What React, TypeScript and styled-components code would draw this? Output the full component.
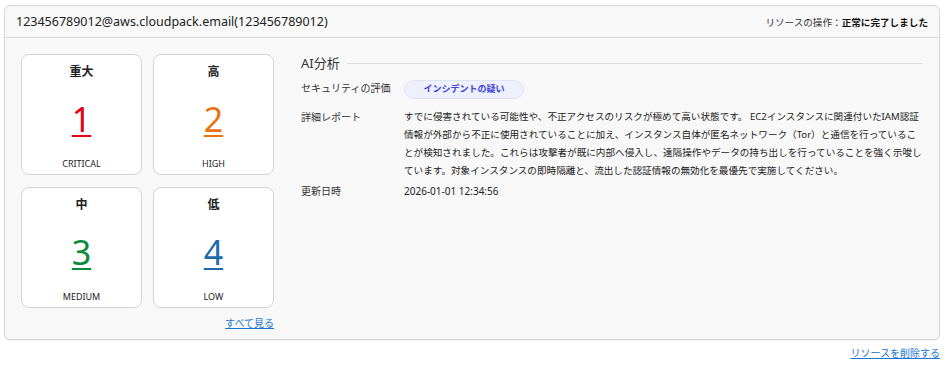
import React from "react";
import styled, { createGlobalStyle } from "styled-components";

const Global = createGlobalStyle`
  html, body { margin: 0; padding: 0; background: #ffffff; }
  body { font-family: "Noto Sans", "Noto Sans CJK JP", sans-serif; color: #222; }
`;

const Page = styled.div`
  padding: 5px 6px 0 4px;
  display: flex;
  flex-direction: column;
`;

const Panel = styled.section`
  border: 1px solid #d6d6d6;
  border-radius: 6px;
  background: #f8f8f8;
  box-shadow: 0 1px 1px rgba(0,0,0,0.06);
`;

const Header = styled.header`
  height: 31px;
  display: flex;
  align-items: center;
  justify-content: space-between;
  padding: 0 11px 0 11px;
  border-bottom: 1px solid #d9d9d9;
`;

const Title = styled.h1`
  margin: 0;
  font-size: 12.5px;
  font-weight: 400;
  color: #222;
`;

const Status = styled.div`
  font-size: 9.6px;
  color: #333;
  font-family: "Noto Sans CJK JP", sans-serif;
  b { font-weight: 700; color: #111; }
`;

const Body = styled.div`
  display: flex;
  gap: 27px;
  padding: 16px 17px 9px 16px;
`;

const Left = styled.div`
  width: 253px;
  display: flex;
  flex-direction: column;
`;

const Grid = styled.div`
  display: grid;
  grid-template-columns: 121px 121px;
  column-gap: 11px;
  row-gap: 12px;
`;

const Card = styled.div`
  height: 121px;
  box-sizing: border-box;
  background: #fff;
  border: 1.5px solid #d4d4d4;
  border-radius: 8px;
  display: flex;
  flex-direction: column;
  align-items: center;
  padding-top: 8px;
`;

const CardTitle = styled.div`
  font-family: "Noto Sans CJK JP", sans-serif;
  font-weight: 700;
  font-size: 12px;
  line-height: 16px;
  color: #222;
`;

const Count = styled.a<{ $c: string }>`
  margin-top: 20px;
  font-size: 34px;
  line-height: 40px;
  color: ${(p) => p.$c};
  text-decoration: underline;
  text-decoration-thickness: 2px;
  text-underline-offset: 3px;
  cursor: pointer;
`;

const Level = styled.div`
  margin-top: 19px;
  font-size: 9px;
  line-height: 12px;
  color: #222;
`;

const SeeAll = styled.a`
  align-self: flex-end;
  margin-top: 8px;
  font-family: "Noto Sans CJK JP", sans-serif;
  font-size: 10px;
  line-height: 14px;
  color: #1b76d2;
  text-decoration: underline;
`;

const Right = styled.div`
  flex: 1;
  display: flex;
  flex-direction: column;
  font-family: "Noto Sans", "Noto Sans CJK JP", sans-serif;
`;

const SectionHead = styled.div`
  display: flex;
  align-items: center;
  gap: 7px;
  font-size: 13px;
  line-height: 18px;
  color: #333;
  &::after {
    content: "";
    flex: 1;
    height: 1px;
    background: #dcdcdc;
  }
`;

const Row = styled.div<{ $mt: number }>`
  display: grid;
  grid-template-columns: 103px 1fr;
  margin-top: ${(p) => p.$mt}px;
  font-size: 10px;
  line-height: 18px;
  color: #222;
`;

const Label = styled.div`
  font-family: "Noto Sans CJK JP", sans-serif;
  color: #333;
`;

const Badge = styled.span`
  display: inline-flex;
  align-items: center;
  justify-content: center;
  width: 120px;
  height: 19px;
  box-sizing: border-box;
  border-radius: 10px;
  background: #eef0fe;
  border: 1px solid #dfe2fb;
  color: #3d3ddc;
  font-family: "Noto Sans CJK JP", sans-serif;
  font-weight: 700;
  font-size: 9px;
`;

const Report = styled.p`
  margin: 0;
  font-family: "Noto Sans", "Noto Sans CJK JP", sans-serif;
  font-size: 9.6px;
  line-height: 18px;
  color: #222;
`;

const Footer = styled.div`
  display: flex;
  justify-content: flex-end;
  padding-top: 6px;
`;

const DeleteLink = styled.a`
  font-family: "Noto Sans CJK JP", sans-serif;
  font-size: 10px;
  line-height: 14px;
  color: #1b76d2;
  text-decoration: underline;
`;

const items = [
  { t: "重大", n: 1, l: "CRITICAL", c: "#e60012" },
  { t: "高", n: 2, l: "HIGH", c: "#e8720c" },
  { t: "中", n: 3, l: "MEDIUM", c: "#0b8a3c" },
  { t: "低", n: 4, l: "LOW", c: "#1f6aab" },
];

export default function App() {
  return (
    <Page>
      <Global />
      <Panel>
        <Header>
          <Title>123456789012@aws.cloudpack.email(123456789012)</Title>
          <Status>
            リソースの操作：<b>正常に完了しました</b>
          </Status>
        </Header>
        <Body>
          <Left>
            <Grid>
              {items.map((i) => (
                <Card key={i.l}>
                  <CardTitle>{i.t}</CardTitle>
                  <Count $c={i.c}>{i.n}</Count>
                  <Level>{i.l}</Level>
                </Card>
              ))}
            </Grid>
            <SeeAll>すべて見る</SeeAll>
          </Left>
          <Right>
            <SectionHead>AI分析</SectionHead>
            <Row $mt={7}>
              <Label>セキュリティの評価</Label>
              <div>
                <Badge>インシデントの疑い</Badge>
              </div>
            </Row>
            <Row $mt={9}>
              <Label>詳細レポート</Label>
              <Report>
                すでに侵害されている可能性や、不正アクセスのリスクが極めて高い状態です。 EC2インスタンスに関連付いたIAM認証情報が外部から不正に使用されていることに加え、インスタンス自体が匿名ネットワーク（Tor）と通信を行っていることが検知されました。これらは攻撃者が既に内部へ侵入し、遠隔操作やデータの持ち出しを行っていることを強く示唆しています。対象インスタンスの即時隔離と、流出した認証情報の無効化を最優先で実施してください。
              </Report>
            </Row>
            <Row $mt={2}>
              <Label>更新日時</Label>
              <div>2026-01-01 12:34:56</div>
            </Row>
          </Right>
        </Body>
      </Panel>
      <Footer>
        <DeleteLink>リソースを削除する</DeleteLink>
      </Footer>
    </Page>
  );
}
